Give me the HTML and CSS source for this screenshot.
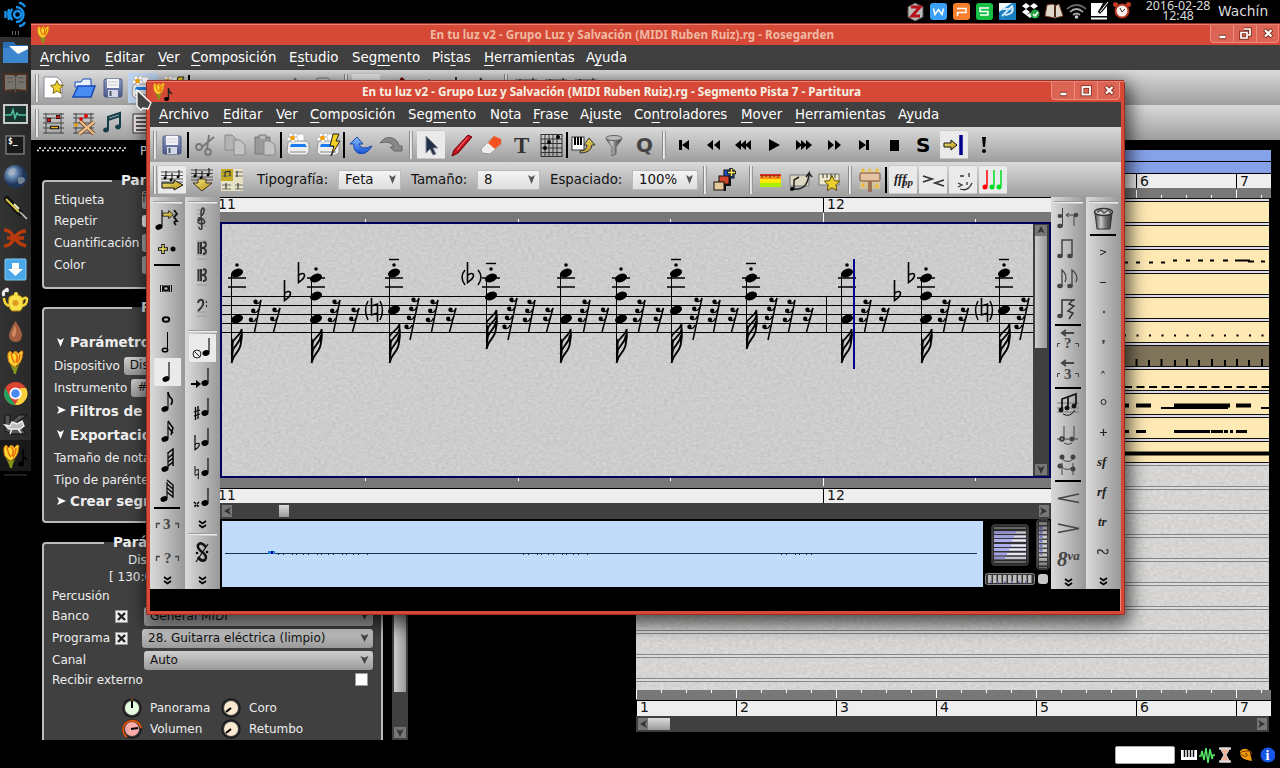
FILE: index.html
```html
<!DOCTYPE html>
<html lang="es">
<head>
<meta charset="utf-8">
<title>Rosegarden</title>
<link rel="stylesheet" href="styles.css">
</head>
<body>
<svg class="defs" width="0" height="0">
<defs>
<linearGradient id="gold" x1="0" y1="0" x2="1" y2="1"><stop offset="0" stop-color="#f5ec80"/><stop offset="1" stop-color="#b08a10"/></linearGradient>
<linearGradient id="blue" x1="0" y1="0" x2="0" y2="1"><stop offset="0" stop-color="#8cc4ff"/><stop offset="1" stop-color="#1550d8"/></linearGradient>
<linearGradient id="metal" x1="0" y1="0" x2="1" y2="0"><stop offset="0" stop-color="#444"/><stop offset=".35" stop-color="#ccc"/><stop offset=".6" stop-color="#777"/><stop offset="1" stop-color="#333"/></linearGradient>
<linearGradient id="disk" x1="0" y1="0" x2="0" y2="1"><stop offset="0" stop-color="#8a9ac4"/><stop offset="1" stop-color="#4a5888"/></linearGradient>
<linearGradient id="wheel" x1="0" y1="0" x2="1" y2="0"><stop offset="0" stop-color="#333"/><stop offset=".5" stop-color="#ccc"/><stop offset="1" stop-color="#333"/></linearGradient>
<linearGradient id="wheelv" x1="0" y1="0" x2="0" y2="1"><stop offset="0" stop-color="#111" stop-opacity=".8"/><stop offset=".35" stop-color="#111" stop-opacity="0"/><stop offset=".7" stop-color="#111" stop-opacity="0"/><stop offset="1" stop-color="#111" stop-opacity=".8"/></linearGradient>
<radialGradient id="globe" cx=".35" cy=".35"><stop offset="0" stop-color="#b8c8dc"/><stop offset=".5" stop-color="#5a7ba4"/><stop offset="1" stop-color="#1f3558"/></radialGradient>
<filter id="paper" x="0" y="0" width="100%" height="100%"><feTurbulence type="fractalNoise" baseFrequency=".28 .4" numOctaves="2" seed="4"/><feColorMatrix values="0 0 0 0 0  0 0 0 0 0  0 0 0 0 0  .3 .3 0 0 -.2"/></filter>
<g id="hd"><ellipse rx="6.3" ry="4" transform="rotate(-22)"/></g>
<g id="led"><path d="M-9 0H9M-9 9H9" stroke="#000" stroke-width="1.5"/></g>
<g id="fl3"><path d="M0 0C2-11 9-10 9.500-21Q11-27 10-34M0-9C2-19 9-19 9.500-28M0-18C2-26 8-26 10-33" fill="none" stroke="#000" stroke-width="1.900"/><path d="M0 0V-26L2-22V-10L1-4z"/></g>
<g id="fl4"><use href="#fl3"/><path d="M0-26C2-32 8-32 10-39V-30" fill="none" stroke="#000" stroke-width="1.700"/></g>
<g id="rb"><circle cx="-5.500" cy="1.700" r="2.200"/><path d="M-6 3.200Q-2 5 0 0" fill="none" stroke="#000" stroke-width="1.300"/></g>
<g id="r2"><use href="#rb"/><use href="#rb" x="-2.300" y="9"/><path d="M0 0L-6.500 24" stroke="#000" stroke-width="1.500"/></g>
<g id="r3"><use href="#rb"/><use href="#rb" x="-2.300" y="9"/><use href="#rb" x="-4.600" y="18"/><path d="M0 0L-6.500 32" stroke="#000" stroke-width="1.500"/></g>
<g id="r4"><use href="#rb"/><use href="#rb" x="-2.300" y="9"/><use href="#rb" x="-4.600" y="18"/><use href="#rb" x="-7" y="27"/><path d="M0 0L-9 42" stroke="#000" stroke-width="1.500"/></g>
<g id="flat"><path d="M0 0V20.500C3 18.500 6 16 6 13.500C6 10.500 2 11 0 13.500" fill="none" stroke="#000" stroke-width="1.600"/></g>
<g id="nat"><path d="M0 0V17L6 15M0 8L6 6V24" fill="none" stroke="#000" stroke-width="1.600"/></g>
<g id="cA"><use href="#hd" y="273"/><use href="#hd" y="319"/><use href="#led" y="278"/><circle cy="265" r="1.800"/><path d="M-5.500 274V362" stroke="#000"/><use href="#fl3" x="-5.500" y="363"/></g>
<g id="cB"><use href="#hd" y="278"/><use href="#hd" y="296"/><use href="#hd" y="319"/><use href="#led" y="278"/><circle cy="269" r="1.800"/><path d="M-4.500 278V362" stroke="#000"/><use href="#fl3" x="-4.500" y="363"/></g>
<g id="cC"><use href="#hd" y="273"/><use href="#hd" y="310"/><use href="#led" y="278"/><circle cy="265" r="1.800"/><path d="M-5 259.500H5" stroke="#000" stroke-width="1.400"/><path d="M-4.500 274V362" stroke="#000"/><use href="#fl4" x="-4.500" y="363"/></g>
<g id="cD"><use href="#hd" y="278"/><use href="#hd" y="296"/><use href="#led" y="278"/><circle cy="269" r="1.800"/><path d="M-5 263.500H5" stroke="#000" stroke-width="1.400"/><path d="M-4.500 278V349" stroke="#000"/><use href="#fl4" x="-4.500" y="349"/></g>
<g id="q"><ellipse cx="14" cy="21" rx="3.600" ry="2.700" transform="rotate(-20 14 21)"/><path d="M17 20V4" stroke="currentColor" stroke-width="1.100"/></g>
<g id="qr"><ellipse cx="19" cy="19" rx="3.600" ry="2.800" transform="rotate(-20 19 19)"/><path d="M22 18V4" stroke="#000" stroke-width="1.100"/></g>
<g id="rose"><path d="M7 2Q9 4 10 5Q11 1 14 3L15 5Q19 0 20 3Q19 6 19 9Q18 14 12 18Q5 15 5 9Q4 4 7 2z" fill="#fbd632" stroke="#d47a10"/><path d="M12 4Q16 7 13 13M8 4Q9 11 12 14M17 5Q17 10 14 14" fill="none" stroke="#e8690a" stroke-width="1.500"/><path d="M5 14Q9 17 11 25H13Q14 18 19 13Q15 18 12 18Q9 18 5 14z" fill="#86941c"/></g>
<g id="staff"><path d="M4 7H26M4 10.500H26M4 14H26M4 17H26" stroke="#333" stroke-width=".8"/><path d="M9 13V6M15 15V8M22 12V5" stroke="#000"/><circle cx="8" cy="13" r="1.400"/><circle cx="14" cy="15" r="1.400"/><circle cx="21" cy="12" r="1.400"/></g>
<g id="save"><rect x="6" y="6" width="18" height="18" rx="1.500" fill="url(#disk)" stroke="#48587f"/><rect x="9" y="6" width="12" height="9" fill="#f4f4f8"/><path d="M10 9H20M10 12H20" stroke="#ccc"/><rect x="10" y="17" width="10" height="7" fill="#d5d8e4"/><path d="M12.500 18V23" stroke="#456" stroke-width="2"/></g>
<g id="print"><path d="M9 4H21V13H9z" fill="#fff" stroke="#bbb"/><path d="M5 13Q5 11 8 11H22Q25 11 26 14V22L23 25H7L4 22z" fill="#eee" stroke="#999"/><path d="M8 14H22L24 17H7z" fill="#1c7cf0"/><path d="M7 21H23V23H7z" fill="#bbb"/><g fill="#fff" stroke="#999" stroke-width=".5"><circle cx="8" cy="5" r="2"/><circle cx="12.500" cy="5" r="2"/><circle cx="13" cy="9" r="2"/><circle cx="6" cy="9" r="2"/><circle cx="10" cy="11" r="2"/></g><circle cx="9.500" cy="8" r="2.300" fill="#f6a000"/></g>
<g id="bolt"><path d="M20 4H26L23 11H27L18 26L21 16H17z" fill="#f4d020" stroke="#222"/></g>
<g id="arr"><path d="M0 0H7V-3L13 2L7 7V4H0z" fill="url(#gold)" stroke="#111"/></g>
<g id="star"><path d="M0-8L2.500-2.500L8-2L4 2L5 8L0 5L-5 8L-4 2L-8-2L-2.500-2.500z" fill="#ecd030" stroke="#5d4a00"/></g>
<g id="chev"><path d="M-3.500-3L0-.500L3.500-3M-3.500 1L0 3.500L3.500 1" fill="none" stroke="#000" stroke-width="1.700"/></g>
<g id="min"><path d="M8 12H15" stroke="#803020" stroke-width="4.500"/><path d="M8.500 12H14.500" stroke="#fff" stroke-width="2.500"/></g>
<g id="cls"><path d="M7.500 4.500L15 12M15 4.500L7.500 12" stroke="#803020" stroke-width="4"/><path d="M8 5L14.500 11.500M14.500 5L8 11.500" stroke="#fff" stroke-width="2.200"/></g>
</defs>
</svg>

<header class="panel">
<svg class="tray" width="260" height="23" viewBox="900 0 260 23">
<path d="M908 7L915 3L923 7V17L915 21L908 17z" fill="#bbb" stroke="#555"/><path d="M911 7H920L912 16H920" fill="none" stroke="#b4151c" stroke-width="3"/>
<rect x="930" y="3" width="17" height="17" rx="3" fill="#3aa0f8"/><path d="M933.500 8.500L935 14.500L938.500 9.500L942 14.500L943.500 8.500" fill="none" stroke="#fff" stroke-width="1.500"/>
<rect x="953" y="3" width="17" height="17" rx="3" fill="#fa7f2c"/><path d="M957 8.500H966V12.500H957.500V16" fill="none" stroke="#fff" stroke-width="1.500"/>
<rect x="976" y="3" width="17" height="17" rx="3" fill="#15c044"/><path d="M989 8H980V11.500H988V15H980" fill="none" stroke="#fff" stroke-width="1.500"/>
<rect x="999" y="3" width="17" height="17" fill="#1c7fc0"/><path d="M999 3H1012L999 12z" fill="#eef6fa"/><path d="M1002 16L1012 6Q1015 14 1005 15M1002 9H1011" fill="none" stroke="#cce8fa" stroke-width="2"/>
<path d="M1026 3L1030 6L1026 9L1022 6zM1034 3L1038 6L1034 9L1030 6zM1026 9L1030 12L1026 15L1022 12zM1030 13L1034 15L1030 18L1026 15z" fill="#fff"/><circle cx="1035" cy="14" r="4.500" fill="#23a640"/><path d="M1033 14L1035 16L1038 12" fill="none" stroke="#fff" stroke-width="1.500"/>
<path d="M1047 5L1053 4L1055 6L1059 4L1063 16L1055 18L1045 16z" fill="#ddd8cc" stroke="#74462b"/><path d="M1055 6V17" stroke="#4b2914" stroke-width="2"/>
<g fill="none" stroke="#aaa" stroke-width="1.700"><path d="M1067 9Q1076.500 1 1086 9" stroke="#666"/><path d="M1070 12Q1076.500 6 1083 12M1073 15Q1076.500 12 1080 15"/></g><circle cx="1076.500" cy="17" r="1.800" fill="#ccc"/>
<path d="M1091 3H1103L1098 12H1102L1107 6V16H1091z" fill="#fff"/><path d="M1091 18.500H1107" stroke="#fff" stroke-width="2"/><path d="M1099 13L1107 2" stroke="#111" stroke-width="3"/><path d="M1100 12L1108 2" stroke="#fff"/>
<circle cx="1115.500" cy="4.500" r="2.500" fill="#c43a24"/><circle cx="1128.500" cy="4.500" r="2.500" fill="#c43a24"/><circle cx="1122" cy="11" r="6.500" fill="#f8f0ec" stroke="#b73420" stroke-width="2"/><path d="M1120 8L1122 12L1125 9" fill="none" stroke="#333"/>
</svg>
<div class="clock">2016-02-28<br>12:48</div>
<div class="user">Wachín</div>
</header>

<nav class="dock">
<div class="logo"><svg width="31" height="37"><g fill="none" stroke="#1590e8" stroke-width="2.500"><circle cx="17.500" cy="14.500" r="3.500"/><path d="M12.500 9A7.500 7.500 0 0 0 12.500 20M16 22A7.500 7.500 0 0 0 16 7M9 9Q7.500 14 9 20M5.500 11V18M19 3Q23 3 25 7M19 26Q23 26 25 22"/></g><path d="M12.500 31V35M15.500 31V35M18.500 31V35" stroke="#666"/></svg></div>
<svg viewBox="0 0 31 31"><path d="M3 5H14L16 8H28V26H3z" fill="#2a6fb5"/><path d="M3 11H28V26H3z" fill="#3c86d0"/><path d="M9 9H28V12L18 17z" fill="#fff"/></svg>
<svg viewBox="0 0 31 31"><path d="M4 6H14L15.500 8L17 6H27V23L17 22L15.500 25L14 22L4 23z" fill="#77736c" stroke="#4a2f20" stroke-width="2"/><path d="M15.500 8V24M7 10H13M7 14H13M18 10H24M18 14H24" stroke="#555"/></svg>
<svg viewBox="0 0 31 31"><rect x="4" y="6" width="23" height="18" fill="#18342f" stroke="#c8c8c8" stroke-width="2"/><path d="M5 16H11L13 11L15 19L17 14L19 16H26" fill="none" stroke="#53c09a" stroke-width="1.500"/></svg>
<svg viewBox="0 0 31 31"><rect x="6" y="6" width="18" height="18" fill="#191919" stroke="#777" stroke-width="1.500"/><text x="8" y="14" class="term">$_</text></svg>
<svg viewBox="0 0 31 31"><circle cx="15.500" cy="15.500" r="11.500" fill="url(#globe)"/><path d="M9 9Q14 5 17 9Q13 14 8 14M18 17Q25 14 25 20Q21 25 18 22z" fill="#a9b4bc" opacity=".6"/></svg>
<svg viewBox="0 0 31 31"><path d="M7 7L20 21" stroke="#111" stroke-width="6" stroke-linecap="round"/><path d="M6 7L19 20" stroke="#ddcd4a" stroke-width="2"/><path d="M20 20L27 27" stroke="#ccc" stroke-width="1.500"/><path d="M14 12L19 17" stroke="#ece9c8" stroke-width="2"/></svg>
<svg viewBox="0 0 31 31"><path d="M4 7Q10 7 13 13Q18 21 26 23M4 23Q10 23 13 17Q18 8 26 8M7 15H24" fill="none" stroke="#b93a0d" stroke-width="3.500"/></svg>
<svg viewBox="0 0 31 31"><rect x="5" y="5" width="21" height="21" rx="1" fill="#4aa7e8" stroke="#82cbf5"/><path d="M12 9H19V15H23L15.500 22L8 15H12z" fill="#fff"/></svg>
<svg viewBox="0 0 31 31"><path d="M9 12Q16 7 22 12Q25 22 20 26H12Q7 22 9 12z" fill="#f8e04a" stroke="#a77d10"/><path d="M9 21Q4 19 4 13M22 21Q27 20 27 14Q26 11 22 15" fill="none" stroke="#f3d635" stroke-width="2.500"/><circle cx="16" cy="9" r="2" fill="#f8e04a"/><circle cx="15.500" cy="18" r="3" fill="#e09a20"/><path d="M4 11Q2 7 6 5Q8 3 7 7" stroke="#eee" stroke-width="3" fill="none"/></svg>
<svg viewBox="0 0 31 31"><path d="M15.500 5Q23 16 22 20Q21 26 15.500 26Q9 25 9 20Q9 15 15.500 5z" fill="#a35d40"/><path d="M15 9Q18 17 14 21Q11 20 12 17z" fill="#d08862"/></svg>
<svg viewBox="0 0 31 31"><use href="#rose" x="3" y="2"/></svg>
<svg viewBox="0 0 31 31"><circle cx="15.500" cy="15.500" r="11.500" fill="#de4433"/><path d="M5.500 10L11 21L15.500 27A11.500 11.500 0 0 1 5.500 10z" fill="#1fa25c"/><path d="M15 27L21 16L20 10H26A11.500 11.500 0 0 1 15 27z" fill="#fbd03d"/><circle cx="15.500" cy="15.500" r="5.200" fill="#4a8bf0" stroke="#fff" stroke-width="1.800"/></svg>
<svg viewBox="0 0 31 31"><path d="M5 6H10V14L19 6H27L17 13L26 25H12L5 22z" fill="#555" stroke="#111"/><path d="M5 16L9 20H20L24 17L22 12L17 15L12 13L10 17zM12 20L10 25M18 20L21 24" fill="#bbb" stroke="#eee" stroke-width="1.500"/></svg>
<svg viewBox="0 0 31 31"><rect width="31" height="31" fill="#191919"/><use href="#rose" x="-1" y="3"/><path d="M23 9V23Q23 14 27 20" stroke="#000" stroke-width="1.500" fill="none"/><ellipse cx="21" cy="24" rx="3" ry="2.500"/></svg>
<i class="more"></i>
</nav>

<section class="main">
<div class="titlebar"><svg class="ticon" width="26" height="24"><use href="#rose" transform="scale(.75)" y="1"/></svg>
<svg class="tt" width="1180" height="22"><text x="396" y="15" textLength="404" lengthAdjust="spacingAndGlyphs">En tu luz v2 - Grupo Luz y Salvación (MIDI Ruben Ruiz).rg - Rosegarden</text></svg>
<div class="wbtns"><svg><use href="#min"/></svg><svg><path d="M10 4H16V10H14M7 7.500H13V13H7z" fill="none" stroke="#803020" stroke-width="3.500"/><path d="M10 4H16V10H14M7 7.500H13V13H7z" fill="none" stroke="#fff" stroke-width="1.700"/></svg><svg><use href="#cls"/></svg></div></div>
<div class="menu m1"><span><u>A</u>rchivo</span><span><u>E</u>ditar</span><span><u>V</u>er</span><span><u>C</u>omposición</span><span>E<u>s</u>tudio</span><span>Seg<u>m</u>ento</span><span>Pis<u>t</u>as</span><span><u>H</u>erramientas</span><span>A<u>y</u>uda</span></div>
<div class="bar mb"><i class="grip"></i>
<svg class="s29"><path d="M5 4H18L23 9V25H5z" fill="#fff" stroke="#889"/><use href="#star" transform="translate(18 14) scale(.8)"/></svg>
<svg class="s29"><path d="M6 9H12L14 6H22V14H6z" fill="#e8f1ff" stroke="#1349b8"/><path d="M4 24L9 13H26L22 24z" fill="#4b8cf0" stroke="#1349b8" stroke-width="1.500"/></svg>
<svg><use href="#save"/></svg>
<svg class="hover"><use href="#print"/></svg>
<svg><use href="#print"/><use href="#bolt"/></svg><i class="sep"></i>
<svg></svg><svg></svg><svg></svg>
<svg><path d="M6 20L14 6L17 10" fill="none" stroke="#666" stroke-width="2"/></svg><svg><path d="M6 5H17L21 9V22H6z" fill="#ccc" stroke="#777"/></svg><i class="grip"></i><svg class="act"></svg><svg><path d="M20 5L23 8L9 24" stroke="#700" stroke-width="3"/></svg><svg><path d="M8 18L18 6L24 10L14 22" fill="#a43"/></svg><svg><path d="M15 4V22" stroke="#333" stroke-width="2"/></svg><svg><path d="M9 5L20 20" stroke="#333" stroke-width="2"/></svg><i class="grip"></i><svg><use href="#staff"/></svg><svg><use href="#staff"/></svg><svg><use href="#staff"/></svg>
</div>
<div class="bar mb"><i class="grip"></i>
<svg class="s29"><path d="M4 6H25M4 10H25M4 15H25M4 20H25M4 25H25M7 5V26M22 5V26" stroke="#444"/><path d="M8 12H12M17 9H21" stroke="#111" stroke-width="4"/><path d="M8.500 12H11.500M17.500 9H20.500" stroke="#e01818" stroke-width="2.500"/><path d="M11 19.500H20" stroke="#111" stroke-width="3.500"/><path d="M12 19.500H19" stroke="#e8b020" stroke-width="1.500"/></svg>
<svg class="s29"><path d="M4 6H25M4 10H25M4 15H25M4 20H25M4 25H25M7 5V26M22 5V26" stroke="#444"/><path d="M11 13L25 26M25 14L10 26" stroke="#7c4b20" stroke-width="4"/><path d="M11 13L25 26M25 14L10 26" stroke="#eac18e" stroke-width="2.300"/><circle cx="17" cy="8" r="2" fill="#d00"/><circle cx="12" cy="11" r="1.800" fill="#d00"/><circle cx="7" cy="17" r="2" fill="#e0a010"/></svg>
<svg><g fill="#123c46" stroke="#123c46"><path d="M10 21V9L22 5V18M10 12L22 8" fill="none" stroke-width="2"/><ellipse cx="8" cy="22" rx="2.500" ry="2"/><ellipse cx="20" cy="19" rx="2.500" ry="2"/></g></svg>
<svg><path d="M5 6H25V25H5z" fill="#eee4e4" stroke="#333"/><path d="M8 10H22M8 14H22M8 18H22M8 22H22" stroke="#555" stroke-width="2"/></svg>
</div>
<div class="workspace">
<aside>
<div class="dotted"><svg width="92" height="8"><path d="M3 3H91" stroke="#eee" stroke-width="1.500" stroke-dasharray="2 3"/><path d="M1 5.500H91" stroke="#eee" stroke-width="1.500" stroke-dasharray="2 3"/></svg><span>Parámetros</span></div>
<div class="group g1"><b class="cap">Parámetros</b><p>Etiqueta<span class="mini">f</span></p><p>Repetir<span class="mini w"></span></p><p>Cuantificación<span class="mini"></span></p><p>Color<span class="mini"></span></p></div>
<div class="group g2"><b class="cap">Fuente</b><h4><svg><path d="M1 1L4.500 3L8 1L4.500 10z"/></svg>Parámetros</h4><p>Dispositivo<span class="drop">Dispositivo</span></p><p>Instrumento<span class="drop">#</span></p><h4><svg><path d="M1 1L10 5L1 9L3 5z"/></svg>Filtros de</h4><h4><svg><path d="M1 1L4.500 3L8 1L4.500 10z"/></svg>Exportación</h4><p>Tamaño de nota</p><p>Tipo de paréntesis</p><h4><svg><path d="M1 1L10 5L1 9L3 5z"/></svg>Crear segmento</h4></div>
<div class="group g3"><b class="cap">Parámetros</b><p class="dis">Dispositivo</p><p class="chan">[ 130:0 ]</p><p>Percusión</p>
<div class="f"><span>Banco</span><i class="check"><svg viewBox="0 0 11 11"><path d="M2 2L9 9M9 2L2 9"/></svg></i><em>General MIDI<svg viewBox="0 0 9 9"><path d="M0 0L4.500 2L9 0L4.500 9z"/></svg></em></div>
<div class="f prog"><span>Programa</span><i class="check"><svg viewBox="0 0 11 11"><path d="M2 2L9 9M9 2L2 9"/></svg></i><em>28. Guitarra eléctrica (limpio)<svg viewBox="0 0 9 9"><path d="M0 0L4.500 2L9 0L4.500 9z"/></svg></em></div>
<div class="f"><span>Canal</span><i></i><em>Auto<svg viewBox="0 0 9 9"><path d="M0 0L4.500 2L9 0L4.500 9z"/></svg></em></div>
<div class="ext"><span>Recibir externo</span><i class="check"></i></div>
<div class="knobs"><svg><circle cx="10" cy="10" r="9" stroke="#1a1a1a" stroke-width="1.500" fill="none"/><circle cx="10" cy="10" r="7" fill="#e4fbe0"/><path d="M10 10V3" stroke="#000" stroke-width="2"/><path d="M9 1H11" stroke="#e50"/></svg><span>Panorama</span><svg><circle cx="10" cy="10" r="9" stroke="#1a1a1a" stroke-width="1.500" fill="none"/><circle cx="10" cy="10" r="7" fill="#fbe8d0"/><path d="M10 10L5 14" stroke="#000" stroke-width="2"/></svg><span>Coro</span>
<svg><circle cx="10" cy="10" r="9" stroke="#1a1a1a" stroke-width="1.500" fill="none"/><path d="M5 18A9 9 0 1 1 19 9" stroke="#e85400" stroke-width="1.700" fill="none"/><circle cx="10" cy="10" r="7" fill="#fbaaaa"/><path d="M9 10L16 9" stroke="#000" stroke-width="2"/></svg><span>Volumen</span><svg><circle cx="10" cy="10" r="9" stroke="#1a1a1a" stroke-width="1.500" fill="none"/><circle cx="10" cy="10" r="7" fill="#fbe8d0"/><path d="M10 10L5 14" stroke="#000" stroke-width="2"/></svg><span>Retumbo</span></div></div>
</aside>
<div class="vscroll"><div class="thumb"></div><svg viewBox="0 0 12 12"><path d="M2 2L6 4L10 2L6 11z"/></svg></div>
<div class="tracks">
<svg width="635" height="58" viewBox="636 140 635 58"><rect x="636" y="150" width="635" height="11" fill="#85a1e8"/><rect x="636" y="162" width="635" height="11" fill="#85a1e8"/><rect x="636" y="174" width="635" height="15" fill="#eee"/><rect x="636" y="188" width="635" height="10" fill="#787878"/><path d="M1136.500 174V188M1236.500 174V188" stroke="#000"/><path d="M1136.500 190V198M1236.500 190V198M1161.500 195V198M1186.500 195V198M1211.500 195V198M1261.500 195V198" stroke="#fff"/><text x="1140" y="186">6</text><text x="1240" y="186">7</text></svg>
<svg width="633" height="492" viewBox="636 198 633 492"><defs><pattern id="rows" width="633" height="24" x="636" y="198" patternUnits="userSpaceOnUse"><rect width="633" height="24" fill="#fee9b4"/><rect width="633" height="1" fill="#111"/><rect y="1" width="633" height="2" fill="#dcdce4"/><rect y="3" width="633" height="1" fill="#111"/></pattern><pattern id="rows2" width="633" height="24" x="636" y="462" patternUnits="userSpaceOnUse"><rect y="0" width="633" height="4" fill="#ddd"/><rect y="0" width="633" height="1" fill="#858585"/><rect y="3" width="633" height="1" fill="#858585"/></pattern></defs>
<rect x="636" y="198" width="633" height="492" fill="#dddcda"/><rect x="636" y="462" width="633" height="228" filter="url(#paper)" opacity=".32"/><rect x="636" y="462" width="633" height="228" fill="url(#rows2)"/><rect x="636" y="198" width="633" height="265" fill="url(#rows)"/><rect x="636" y="346" width="633" height="20" fill="#80755b"/>
<g stroke="#000" stroke-width="2" fill="none"><path d="M1124 262.500H1128M1136 262.500h4m9 0h4m8 0h4M1173 260.500h4m9 0h4m8 0h5m7 0h4m9 0h5m7 0h14v1h5m7 0h4"/><path d="M1124 335.500H1269" stroke-dasharray="2 10.500"/><path d="M1136.500 359V366M1149 360V366M1161.500 359V366M1175 360V366M1187 359V366M1199 360V366M1212 359V366M1225 360V366M1237 359V366M1249 360V366M1262 359V366"/><path d="M1124 387H1269" stroke-dasharray="8 4.500"/><path d="M1125 405.500H1129M1136 405.500H1151M1174 405.500H1230M1236 405.500H1251" stroke-width="4"/><path d="M1161 408H1228M1261 408H1269"/><path d="M1124 431.500H1129M1136 431.500H1146M1174 431.500H1210M1211 431.500H1223M1224 431.500h4m2 0h3m3 0h11" stroke-width="3"/><path d="M1124 453.500H1269" stroke-width="4"/></g></svg>
<svg width="635" height="26" viewBox="636 690 635 26"><rect x="636" y="690" width="635" height="10" fill="#787878"/><rect x="636" y="700" width="635" height="1" fill="#000"/><rect x="636" y="701" width="635" height="15" fill="#eee"/><path d="M636.500 690V699M736.500 690V698M836.500 690V698M936.500 690V698M1036.500 690V698M1136.500 690V698M1236.500 690V698" stroke="#fff"/><path d="M661 691.500H1262" stroke="#fff" stroke-width="3" stroke-dasharray="1 24"/><path d="M636.500 700V716M736.500 700V716M836.500 700V716M936.500 700V716M1036.500 700V716M1136.500 700V716M1236.500 700V716" stroke="#000"/><text x="640" y="712">1</text><text x="740" y="712">2</text><text x="840" y="712">3</text><text x="940" y="712">4</text><text x="1040" y="712">5</text><text x="1140" y="712">6</text><text x="1240" y="712">7</text></svg>
<div class="hscroll"><svg viewBox="0 0 10 12"><path d="M9 2L2 6L9 10L7 6z"/></svg><b></b><svg viewBox="0 0 10 12" class="end"><path d="M1 2L8 6L1 10L3 6z"/></svg></div>
</div>
</div>
<footer><i></i><svg width="95" height="22" viewBox="1180 744 95 22"><rect x="1181" y="750" width="16" height="10" fill="#fff"/><path d="M1184.500 750V757M1187.500 750V757M1190.500 750V757M1193.500 750V757" stroke="#111" stroke-width="1.500"/><path d="M1199 756H1201L1202 751L1204 760L1206 748L1208 763L1210 749L1212 759L1213 755H1215" fill="none" stroke="#54e86a" stroke-width="1.500"/><path d="M1220 748H1230L1226 755L1230 762H1220L1224 755z" fill="#f2b093" stroke="#ddd"/><path d="M1219 748.500H1231M1219 761.500H1231" stroke="#ddd" stroke-width="2"/><path d="M1240 751Q1246 746 1250 752L1252 761L1247 760Q1239 758 1240 751z" fill="#f39c12"/><path d="M1245 754q2-2 2 1t-5 0t4-4t4 5" fill="none" stroke="#7b3c00"/><circle cx="1268" cy="755" r="7.500" fill="#1657e8"/><text x="1265.500" y="760" class="inf">i</text></svg></footer>
</section>

<section class="score">
<div class="titlebar"><svg class="ticon" width="26" height="22"><use href="#rose" transform="scale(.72)" y="1"/><path d="M18.500 18V7Q18 10 22 13" fill="none" stroke="#222" stroke-width="1.500"/><ellipse cx="16.500" cy="18" rx="2.500" ry="2"/></svg>
<svg class="tt" width="880" height="22"><text x="212" y="15" textLength="499" lengthAdjust="spacingAndGlyphs">En tu luz v2 - Grupo Luz y Salvación (MIDI Ruben Ruiz).rg - Segmento Pista 7 - Partitura</text></svg>
<div class="wbtns"><svg><use href="#min"/></svg><svg><rect x="7.500" y="5" width="7.500" height="7.500" fill="none" stroke="#803020" stroke-width="3.500"/><rect x="7.500" y="5" width="7.500" height="7.500" fill="none" stroke="#fff" stroke-width="1.800"/></svg><svg><use href="#cls"/></svg></div></div>
<div class="menu m2"><span><u>A</u>rchivo</span><span><u>E</u>ditar</span><span><u>V</u>er</span><span><u>C</u>omposición</span><span>Seg<u>m</u>ento</span><span>N<u>o</u>ta</span><span><u>F</u>rase</span><span>A<u>j</u>uste</span><span>Co<u>n</u>troladores</span><span><u>M</u>over</span><span><u>H</u>erramientas</span><span>A<u>y</u>uda</span></div>
<div class="bar"><i class="grip"></i>
<svg><use href="#save"/></svg><i class="sep"></i>
<svg><g fill="none" stroke="#777" stroke-width="1.800"><circle cx="9" cy="17" r="3"/><circle cx="18" cy="22" r="3"/><path d="M12 17L24 7M17 19L19 5"/></g></svg>
<svg><path d="M5 5H12L16 9V20H5z" fill="#b4b4b4" stroke="#888"/><path d="M14 10H20L25 15V25H14z" fill="#c4c4c4" stroke="#888"/></svg>
<svg><path d="M5 7H20V24H5z" fill="#999" stroke="#777"/><path d="M9 9V5H16V9" fill="#bbb" stroke="#777"/><path d="M14 11H20L25 15V25H14z" fill="#c4c4c4" stroke="#888"/></svg><i class="sep"></i>
<svg><use href="#print"/></svg><svg><use href="#print"/><use href="#bolt"/></svg><i class="sep"></i>
<svg><path d="M4 14L11 7L17 14H13Q15 21 26 16Q20 26 12 23Q7 20 8 14z" fill="url(#blue)" stroke="#1346a8"/></svg>
<svg><path d="M26 21L18 21L14 17H18Q15 10 4 13Q9 6 16 8Q22 10 23 16H26z" fill="#888" stroke="#666"/></svg><i class="grip"></i>
<svg class="act"><path d="M10 6L22 18H17L20 24L17 25L14 19L10 23z" fill="#223048" stroke="#889"/></svg>
<svg><path d="M22 5L26 7L12 23L6 26L8 20z" fill="#c5121c" stroke="#6c0008"/><path d="M22 7L11 20" stroke="#ff8884"/></svg>
<svg><path d="M5 19L17 7L25 10V15L14 24L6 23z" fill="#eee" stroke="#999"/><path d="M12 13L18 6L25 9V14L19 19z" fill="#f35322"/></svg>
<svg><text x="8" y="23" class="bigT">T</text></svg>
<svg><path d="M5 4V27M9 4V27M13 4V27M17 4V27M21 4V27M26 4V27M5 4.500H26M5 9H26M5 13.500H26M5 18H26M5 22.500H26M5 26.500H26" stroke="#333"/><circle cx="22" cy="7" r="2"/><circle cx="13" cy="12" r="2"/><circle cx="9" cy="18" r="2"/></svg><i class="sep"></i>
<svg><rect x="3" y="7" width="12" height="13" fill="#fff" stroke="#333"/><path d="M6 7V15M9 7V15M12 7V15" stroke="#000" stroke-width="2"/><path d="M11 21Q18 21 18 15H15L20 8L26 15H23Q22 23 11 23z" fill="url(#gold)" stroke="#333"/></svg>
<svg><path d="M7 9H23L17 17V24L13 26V17z" fill="url(#metal)" stroke="#666"/><ellipse cx="15" cy="8" rx="8" ry="2.500" fill="#bbb" stroke="#666"/></svg>
<svg><text x="7" y="22" class="bigQ">Q</text></svg><i class="grip"></i>
<svg><path d="M10 10h3v10h-3zM20 10V20L13 15z"/></svg>
<svg><path d="M14 10V20L8 15zM21 10V20L15 15z"/></svg>
<svg><path d="M12 10V20L6 15zM17 10V20L11 15zM22 10V20L16 15z"/></svg>
<svg><path d="M10 9L21 15L10 21z"/></svg>
<svg><path d="M7 10L13 15L7 20zM12 10L18 15L12 20zM17 10L23 15L17 20z"/></svg>
<svg><path d="M9 10L15 15L9 20zM16 10L22 15L16 20z"/></svg>
<svg><path d="M10 10L17 15L10 20zM17 10h3v10h-3z"/></svg>
<svg><rect x="11" y="10" width="9" height="11"/></svg>
<svg><text x="7" y="22" class="bigS">S</text></svg>
<svg class="act"><use href="#arr" transform="translate(5 13)"/><path d="M22 5V25" stroke="#008" stroke-width="3.500"/></svg>
<svg><path d="M13 7H17L16 17H14z"/><circle cx="15" cy="21" r="2"/></svg>
</div>
<div class="bar b2"><i class="grip"></i>
<svg class="act"><use href="#staff"/><path d="M5 18H17V15L26 20L17 25V23H5z" fill="url(#gold)" stroke="#111"/></svg>
<svg><use href="#staff" y="-2"/><path d="M11 14H19V18H25L15 26L6 18H11z" fill="url(#gold)" stroke="#432"/></svg>
<svg><path d="M4 4H26V26H4z" fill="#e4e1c4"/><rect x="4" y="4" width="12" height="12" fill="#c4aa20"/><path d="M5 7H14M5 11H14M5 20H14M5 24H14M18 7H26M18 11H26M18 20H26M18 24H26" stroke="#777"/><path d="M8 12V7L13 6V11M9 24V18M20 12V6M21 24V18" fill="none" stroke="#222"/></svg>
<label>Tipografía:</label><span class="combo c1">Feta<svg viewBox="0 0 9 9"><path d="M1 0L4.500 2L8 0L4.500 9z"/></svg></span>
<label>Tamaño:</label><span class="combo c2">8<svg viewBox="0 0 9 9"><path d="M1 0L4.500 2L8 0L4.500 9z"/></svg></span>
<label>Espaciado:</label><span class="combo c3">100%<svg viewBox="0 0 9 9"><path d="M1 0L4.500 2L8 0L4.500 9z"/></svg></span><i class="grip"></i>
<svg><rect x="14" y="5" width="10" height="8" fill="#1854d0" stroke="#111"/><path d="M21 3V12M17 7.500H26" stroke="#222" stroke-width="3.500"/><path d="M21.500 4V11M18 7.500H25" stroke="#fee55b" stroke-width="1.500"/><rect x="9" y="11" width="10" height="8" fill="#d5472a" stroke="#111"/><rect x="4" y="17" width="10" height="8" fill="#e5c89a" stroke="#111"/><path d="M20 13V20H15V26" fill="none" stroke="#111" stroke-width="2"/></svg><i class="grip wide"></i>
<svg><path d="M5 10H26V22H5z" fill="#a6f000"/><path d="M5 10H26V18H5z" fill="#ffe80a"/><path d="M5 10H26V14H5z" fill="#ff8a20"/><path d="M5 10H26" stroke="#d00" stroke-width="1.500"/><path d="M7 10V13M11 10V12M15 10V13M19 10V12M23 10V13" stroke="#333"/></svg>
<svg><path d="M5 10H24V21H5z" fill="#ddd6c0" stroke="#777"/><path d="M8 24Q23 26 24 8L21 12M24 8L27 12M9 24V15L14 12" fill="none" stroke="#222" stroke-width="1.500"/><circle cx="7" cy="24" r="2"/></svg>
<svg><path d="M4 9H24V20H4z" fill="#eee8cc" stroke="#777"/><path d="M8 9V13M12 9V13M16 9V13M20 9V13" stroke="#333"/><use href="#star" transform="translate(17 18) scale(.95)"/></svg><i class="grip"></i>
<svg><path d="M5 5H25V24H5z" fill="#f3d67b" opacity=".5"/><rect x="5" y="8" width="20" height="8" rx="1" fill="#e4c2a2" stroke="#7b4a35"/><rect x="13" y="16" width="4" height="11" fill="#9d7358"/><g fill="#f3b820"><circle cx="8" cy="5" r="1.500"/><circle cx="15" cy="5" r="1.300"/><circle cx="22" cy="5" r="1.500"/><circle cx="8" cy="20" r="1.500"/><circle cx="22" cy="21" r="1.500"/></g></svg><i class="sep"></i>
<svg class="act"><text x="6" y="18" class="dyn">fff</text><text x="14" y="21" class="dyn s">pp</text></svg>
<svg class="act"><path d="M5 11L14 14L5 17M26 15L17 18L26 21" fill="none" stroke="#333" stroke-width="1.700"/></svg>
<svg class="act"><path d="M12 11H16M21 8V12M19 17V20M10 18L14 20L10 22M12 24Q20 27 24 18" fill="none" stroke="#333" stroke-width="1.300"/></svg>
<svg class="act"><path d="M9 5V21" stroke="#f00" stroke-width="1.500"/><circle cx="7" cy="22" r="2.500" fill="#f00"/><path d="M16 5V21M23 5V21" stroke="#0d2" stroke-width="1.500"/><circle cx="14" cy="22" r="2.500" fill="#0d2"/><circle cx="21" cy="22" r="2.500" fill="#0d2"/></svg>
</div>
<div class="body">
<div class="col"><i class="hgrip"></i>
<svg><g transform="translate(-5 2)"><use href="#q"/></g><use href="#arr" transform="translate(13 9) scale(.8)"/><path d="M24 6L27 10L24 13L27 17Q22 17 26 21" fill="none" stroke="#111" stroke-width="1.800"/></svg>
<svg><path d="M8 15H18M13 10V20" stroke="#111" stroke-width="3.500"/><path d="M9 15H17M13 11V19" stroke="#f5e867" stroke-width="1.500"/><circle cx="23" cy="15" r="2.500"/></svg><i class="hsep"></i>
<svg><path d="M10.500 18V25M12.500 18V25M19.500 18V25M21.500 18V25M13 19H19M13 24H19" stroke="#111"/><ellipse cx="16" cy="21.500" rx="2.500" ry="2" fill="none" stroke="#000" stroke-width="1.600"/></svg>
<svg><ellipse cx="16" cy="22.500" rx="3.200" ry="2.200" fill="none" stroke="#000" stroke-width="2"/></svg>
<svg><ellipse cx="15" cy="23" rx="2.700" ry="1.800" fill="none" stroke="#000" stroke-width="1.500"/><path d="M17.500 23V5" stroke="#000"/></svg>
<svg class="act"><use href="#q" x="2" y="1"/></svg>
<svg><g transform="translate(1 1)"><use href="#q"/><path d="M17 4Q18 9 21 11Q22 13 20 17" fill="none" stroke="#000" stroke-width="1.500"/></g></svg>
<svg><g transform="translate(1 1)"><use href="#q"/><path d="M17 3L22 10L20 17M17 9L22 15" fill="none" stroke="#000" stroke-width="1.500"/></g></svg>
<svg><g transform="translate(1 1)"><use href="#q"/><path d="M17 5L22 1V18M17 10L22 6M17 14L22 10M17 18L22 14" fill="none" stroke="#000" stroke-width="1.500"/></g></svg>
<svg><g transform="translate(0 1)"><use href="#q"/><path d="M17 2L23 7V20M17 6L23 11M17 10L23 15M17 14L23 19" fill="none" stroke="#000" stroke-width="1.300"/></g></svg><i class="hsep"></i>
<svg><path d="M6.500 18V13.500H10M28.500 18V13.500H25" fill="none" stroke="#444" stroke-width="1.300"/><text x="13" y="19" class="tri">3</text></svg>
<svg><path d="M6.500 21V16.500H10M28.500 21V16.500H25" fill="none" stroke="#444" stroke-width="1.300"/><text x="14" y="23" class="tri">?</text></svg>
<svg class="cv"><use href="#chev" x="17.500" y="10"/></svg></div>
<div class="col"><i class="hgrip"></i>
<svg><path d="M12 6H22M12 10H22M12 14H22M12 18H22M12 22H22" stroke="#999"/><path d="M17 25Q14 26 14 23M17 25L16 8Q17 2 19 5Q20 10 14 14Q11 19 16 20Q21 20 19 16Q16 13 14 17" fill="none" stroke="#333" stroke-width="1.500"/></svg>
<svg><path d="M12 7H22M12 21H22M12 25H22" stroke="#999"/><path d="M13.500 8V20M16 8V20M17 14Q20 14 21 17Q21 20 18 20M17 14Q21 14 21 10Q20 7 18 9" fill="none" stroke="#333" stroke-width="2"/></svg>
<svg><path d="M12 7H22M12 17H22M12 21H22" stroke="#999"/><path d="M13.500 5V17M16 5V17M17 11Q20 11 21 14Q21 17 18 17M17 11Q21 11 21 7Q20 4 18 6" fill="none" stroke="#333" stroke-width="2"/></svg>
<svg><path d="M12 6H22M12 18H22M12 22H22" stroke="#999"/><path d="M13 9Q14 5 17 6Q21 10 13 17" fill="none" stroke="#333" stroke-width="2"/><path d="M21 8H22M21 12H22" stroke="#222" stroke-width="2"/></svg><i class="hgrip two"></i>
<svg class="act"><use href="#qr" x="2" y="1"/><circle cx="12" cy="21" r="4" fill="none" stroke="#222"/><path d="M9 18L15 24" stroke="#222"/></svg>
<svg><g transform="translate(1 1)"><use href="#qr"/><path d="M5 20H11" stroke="#000" stroke-width="2"/><path d="M10 16L15 20L10 24z"/></g></svg>
<svg><g transform="translate(1 1)"><use href="#qr"/><path d="M9.500 13V26M12 12V25M8 18L14 16M8 22L14 20" stroke="#000" stroke-width="1.300"/></g></svg>
<svg><g transform="translate(1 1)"><use href="#qr"/><use href="#flat" transform="translate(9 11) scale(.72)"/></g></svg>
<svg><g transform="translate(1 1)"><use href="#qr"/><use href="#nat" transform="translate(9 12) scale(.55)"/></g></svg>
<svg><g transform="translate(1 1)"><use href="#qr"/><path d="M8 18L13 23M13 18L8 23" stroke="#000" stroke-width="1.600" stroke-dasharray="2.500 1.500"/></g></svg>
<svg class="cv"><use href="#chev" x="17.500" y="11"/></svg><i class="hgrip three"></i>
<svg><path d="M21 9Q16 3 13 7Q12 10 17 14Q23 18 20 22Q16 24 13 19" fill="none" stroke="#111" stroke-width="2.600"/><path d="M23 6L11 24" stroke="#111" stroke-width="1.300"/><circle cx="12" cy="15" r="1.300"/><circle cx="22" cy="14" r="1.300"/></svg>
<svg class="cv"><use href="#chev" x="17.500" y="12"/></svg></div>
<div class="center">
<svg width="831" height="25" viewBox="220 197 831 25"><rect x="220" y="197" width="831" height="25" fill="#eee"/><rect x="220" y="197" width="831" height="1"/><rect x="220" y="212" width="831" height="10" fill="#787878"/><path d="M823.500 198V212" stroke="#000"/><path d="M823.500 213V222M365.500 219V222M518.500 219V222M670.500 219V222M975.500 219V222" stroke="#fff"/><text x="218" y="209">11</text><text x="827" y="209">12</text></svg>
<div class="view"><svg width="811" height="252" viewBox="222 224 811 252"><rect x="222" y="224" width="811" height="252" fill="#d3d3d3"/><rect x="222" y="224" width="811" height="252" filter="url(#paper)" opacity=".3"/>
<path d="M222 296.500H1033M222 305.500H1033M222 314.500H1033M222 323.500H1033M222 332.500H1033M826.500 296V333" stroke="#000"/>
<use href="#cA" x="237"/><use href="#r3" x="261" y="300"/><use href="#r2" x="280" y="308"/>
<use href="#flat" x="284.500" y="280"/><use href="#flat" x="298.500" y="262"/><use href="#cB" x="316"/><use href="#r3" x="340" y="300"/><use href="#r2" x="359" y="308"/>
<use href="#nat" x="371.500" y="298"/><path d="M368 301Q363 310 368 320M380 301Q385 310 380 320" fill="none" stroke="#000" stroke-width="1.500"/><use href="#cC" x="394"/><use href="#r4" x="419" y="298"/><use href="#r3" x="438" y="300"/><use href="#r2" x="456" y="308"/>
<use href="#flat" x="467.500" y="262"/><path d="M465 270Q459 277 465 285M478 270Q484 277 478 285" fill="none" stroke="#000" stroke-width="1.500"/><use href="#cD" x="491"/><use href="#r4" x="517" y="298"/><use href="#r3" x="535" y="300"/><use href="#r2" x="553" y="308"/>
<use href="#cA" x="566"/><use href="#r3" x="590" y="300"/><use href="#r2" x="608.500" y="308"/><use href="#cB" x="621"/><use href="#r3" x="645" y="300"/><use href="#r2" x="663.500" y="308"/>
<use href="#cC" x="676"/><use href="#r4" x="702" y="298"/><use href="#r3" x="720" y="300"/><use href="#r2" x="738" y="308"/><use href="#cD" x="751"/><use href="#r4" x="777" y="298"/><use href="#r3" x="795" y="300"/><use href="#r2" x="813" y="308"/>
<use href="#cA" x="847"/><use href="#r3" x="871" y="300"/><use href="#r2" x="889" y="308"/><use href="#flat" x="894.500" y="280"/><use href="#flat" x="908.500" y="262"/><use href="#cB" x="926"/><use href="#r3" x="950" y="300"/><use href="#r2" x="968.500" y="308"/>
<use href="#nat" x="981.500" y="298"/><path d="M978 301Q973 310 978 320M990 301Q995 310 990 320" fill="none" stroke="#000" stroke-width="1.500"/><use href="#cC" x="1004"/><use href="#r4" x="1029" y="298"/><path d="M854 259V369" stroke="#00008b" stroke-width="2"/></svg>
<div class="vs"><svg viewBox="0 0 12 12"><path d="M6 1L10 9L6 7L2 9z"/></svg><div></div><svg viewBox="0 0 12 12"><path d="M2 2L6 4L10 2L6 11z"/></svg></div></div>
<svg width="831" height="25" viewBox="220 478 831 25"><rect x="220" y="478" width="831" height="25" fill="#eee"/><rect x="220" y="478" width="831" height="10" fill="#787878"/><rect x="220" y="488" width="831" height="1"/><path d="M823.500 489V503" stroke="#000"/><path d="M823.500 478V486M365.500 478V481M518.500 478V481M670.500 478V481M975.500 478V481" stroke="#fff"/><text x="218" y="500">11</text><text x="827" y="500">12</text></svg>
<div class="hscroll"><svg viewBox="0 0 10 12"><path d="M9 2L2 6L9 10L7 6z"/></svg><b class="sm"></b><svg viewBox="0 0 10 12" class="end"><path d="M1 2L8 6L1 10L3 6z"/></svg></div>
<svg width="831" height="70" viewBox="220 519 831 70"><rect x="220" y="519" width="831" height="70"/><rect x="222" y="521" width="761" height="66" fill="#c0dcfa"/><path d="M225 553.500H977" stroke="#123050"/><path d="M268 552.500H275" stroke="#2080e8" stroke-width="3"/><path d="M272 551V554" stroke="#008" stroke-width="2"/><path d="M278 554.500H370M523 554.500H590M781 554.500H815" stroke="#123050" stroke-dasharray="1 4 1 8 1 3 1 6"/>
<rect x="992" y="525" width="36" height="40" rx="2" fill="#333" stroke="#666"/><g stroke-width="2.500"><path d="M994 528H1026M994 562H1026" stroke="#aaa" stroke-width="1.500"/><path d="M994 532.500H1026M994 536.500H1026M994 540.500H1026M994 545.500H1026M994 549.500H1026M994 554H1026M994 558H1026" stroke="#ececfc"/><path d="M994 532.500H1016M994 536.500H1014M994 540.500H1012M994 545.500H1011M994 549.500H1009M994 554H1007M994 558H1005" stroke="#a9a9f4"/></g><rect x="992" y="525" width="36" height="40" fill="url(#wheelv)" opacity=".5"/>
<rect x="1037" y="520" width="12" height="49" rx="2" fill="#444" stroke="#777"/><path d="M1043 522V568" stroke="#ccc" stroke-width="8" stroke-dasharray="3 1.500"/><path d="M1041 526V555" stroke="#77b" stroke-width="3" stroke-dasharray="3 1.500"/><rect x="1037" y="520" width="12" height="49" fill="url(#wheelv)" opacity=".7"/>
<rect x="985.500" y="573.500" width="49" height="11" rx="2" fill="#333" stroke="#888"/><path d="M988 579H1033" stroke="#bbb" stroke-width="8" stroke-dasharray="3.500 1.500"/><path d="M990 582H1028" stroke="#77b" stroke-width="2" stroke-dasharray="2 5"/><rect x="1038" y="574" width="10" height="10" rx="3" fill="#c8c8c8"/></svg>
</div>
<div class="col dim"><i class="hgrip"></i>
<svg><g transform="translate(1 0)"><ellipse cx="8" cy="22" rx="2.800" ry="2.200"/><ellipse cx="8" cy="12" rx="2.500" ry="2"/><path d="M10.500 4V22M14 11H22M14 11L17 9M14 11L17 13M22 11V22" stroke="#444" fill="none"/><circle cx="24" cy="11" r="2.300"/></g></svg>
<svg><g transform="translate(2 0)"><path d="M9 22V6H19V22" fill="none" stroke="#444" stroke-width="1.500"/><ellipse cx="7" cy="22" rx="2.800" ry="2.200"/><ellipse cx="17" cy="22" rx="2.800" ry="2.200"/></g></svg>
<svg><g transform="translate(2 0)"><path d="M9 22V6Q15 11 12 18M19 22V6Q26 11 23 18" fill="none" stroke="#444" stroke-width="1.300"/><ellipse cx="7" cy="22" rx="2.800" ry="2.200"/><ellipse cx="17" cy="22" rx="2.800" ry="2.200"/></g></svg>
<svg><g transform="translate(2 0)"><path d="M9 22V6H22M20 6L16 10L21 12L15 17L20 19L16 25" fill="none" stroke="#333" stroke-width="1.500"/><ellipse cx="7" cy="22" rx="2.800" ry="2.200"/></g></svg><i class="hsep"></i>
<svg><path d="M11 6H23M15 3L11 6L15 9" fill="none" stroke="#444" stroke-width="2"/><path d="M6.500 20V16.500H9M27.500 20V16.500H24" fill="none" stroke="#444"/><text x="13" y="21" class="tri">?</text></svg>
<svg><path d="M11 6H23M15 3L11 6L15 9" fill="none" stroke="#444" stroke-width="2"/><path d="M6.500 20V16.500H9M27.500 20V16.500H24" fill="none" stroke="#444"/><text x="13" y="22" class="tri">3</text></svg><i class="hsep"></i>
<svg><g fill="#111" stroke="#111"><path d="M6 13H28M6 18H28M6 22H28" stroke="#777"/><path d="M11 19V9L25 4V15M17 17V7" fill="none" stroke-width="1.700"/><circle cx="10" cy="20" r="2"/><circle cx="16" cy="18" r="2"/><circle cx="23" cy="16" r="2"/><path d="M12 24Q19 28 24 20" fill="none"/></g></svg>
<svg><path d="M6 19H27M13 18V6M23 18V6M13 23Q17 26 21 23" fill="none" stroke="#444"/><circle cx="11" cy="19" r="2" fill="none" stroke="#333" stroke-width="1.500"/><circle cx="21" cy="19" r="2.500"/></svg>
<svg><path d="M11 13V25M22 13V25M11 9Q17 14 22 9M11 17Q16 22 22 17" fill="none" stroke="#444"/><circle cx="11" cy="7" r="2.500"/><circle cx="22" cy="7" r="2.500"/><circle cx="9" cy="16" r="2.500"/><circle cx="22" cy="19" r="2.500"/></svg><i class="hsep"></i>
<svg><path d="M28 11L7 15.500L28 19.500" fill="none" stroke="#444" stroke-width="1.600"/></svg>
<svg><path d="M7 11L28 15.500L7 19.500" fill="none" stroke="#444" stroke-width="1.600"/></svg>
<svg><text x="6" y="23" class="va">8<tspan font-size="13" dy="-6">va</tspan></text></svg>
<svg class="cv"><use href="#chev" x="17.500" y="9"/></svg></div>
<div class="col dim r"><i class="hgrip"></i>
<svg><path d="M9 9L11 25H24L26 9z" fill="url(#metal)" stroke="#333"/><ellipse cx="17.500" cy="8" rx="9" ry="3.500" fill="#ccc" stroke="#333" stroke-width="1.500"/><path d="M11 8L15 6L18 9L22 6L25 9" fill="none" stroke="#555" stroke-width="1.500"/></svg><i class="hsep"></i>
<svg><path d="M14 13L20 15L14 18" fill="none" stroke="#222"/></svg>
<svg><path d="M14 15.500H20" stroke="#222"/></svg>
<svg><circle cx="18" cy="15" r="1.200"/></svg>
<svg><path d="M16 13H19L18 17H17z"/></svg>
<svg><path d="M15 18L16 14H18L19 18L17 15z"/></svg>
<svg><circle cx="17.500" cy="15" r="2.500" fill="none" stroke="#222"/></svg>
<svg><path d="M14 15.500H21M17.500 12V19" stroke="#222" stroke-width="1.200"/></svg>
<svg><text x="11" y="19" class="dyn">sf</text></svg>
<svg><text x="11" y="19" class="dyn">rf</text></svg>
<svg><text x="12" y="19" class="dyn">tr</text></svg>
<svg><path d="M12.500 17Q10 13 14 13Q16 13 18 16Q22 18 22 14Q22 12 20 13" fill="none" stroke="#333" stroke-width="1.300"/></svg>
<svg class="cv"><use href="#chev" x="17.500" y="14"/></svg></div>
</div>
</section>
<svg class="cursor" width="20" height="28"><path d="M1 1V17L5 21L7 19L12 20L15 14L1 1z" fill="#444" stroke="#fff" stroke-width="1.300"/></svg>
</body>
</html>
```
FILE: styles.css
```css
*{box-sizing:border-box}
body{margin:0;width:1280px;height:768px;overflow:hidden;background:#000;position:relative;font:12px "DejaVu Sans",sans-serif;color:#fff}
.defs{position:absolute}
svg{display:block;flex:none}
p,h4{margin:0;font-weight:normal}
.panel{height:23px;display:flex;padding-left:900px;color:#ddd}
.tray{margin-right:-16px}
.clock{width:68px;font:12.400px/10px "Noto Sans",sans-serif;text-align:center;padding-top:1px;white-space:nowrap}
.user{font-size:13.800px;line-height:22px;margin-left:6px}
.dock{position:absolute;left:0;top:0;width:31px;height:471px;background:linear-gradient(90deg,#333,#292929)}
.dock>svg{width:31px;height:31px}
.dock .logo{background:#000;height:37px}
.dock .more{display:block;height:2px;width:23px;margin:3px 4px;background:#1e1e1e}
.term{font:bold 8px "DejaVu Sans Mono",monospace;fill:#fff}
.main{position:absolute;left:31px;top:23px;width:1249px;height:745px;background:#000}
.titlebar{height:22px;background:#d64937;border-top:1px solid #963428;box-shadow:inset 0 1px #ea8072;display:flex;position:relative}
.ticon{width:26px}
.main .ticon{margin-left:3px}
.tt{margin-left:-26px}
.tt text{font:bold 12px "Noto Sans",sans-serif;fill:#f6f2e4}
.main .tt text{fill:#f0b9a2}
.wbtns{display:flex;position:absolute;right:1px;top:1px;border:1px solid #ef8d80;border-top:0;border-radius:0 0 4px 4px;background:#dc6455}
.wbtns svg{width:23px;height:17px;border-right:1px solid #ef8d80}
.wbtns svg:last-child{border:0;width:21px}
.menu{height:25px;background:#404040;display:grid;font-size:13.330px;line-height:25px;white-space:nowrap}
.menu u{text-underline-offset:3px}
.m1{padding-left:9px;grid-template-columns:65px 53px 33px 98px 63px 80px 52px 102px 60px}
.m2{padding-left:9px;grid-template-columns:64px 53px 34px 98px 82px 43px 47px 54px 107px 54px 103px 60px}
.bar{height:35px;background:linear-gradient(#dadada,#9e9e9e);display:flex;align-items:center;color:#111;padding-left:3px}
.bar>svg{width:30px;height:30px}
.bar>svg.s29{width:29.500px}
.main .bar{padding-left:4px}
.bar>svg.act,.col>svg.act{background:#eaeaea;border-radius:2px;box-shadow:inset 0 0 0 1px #b8b8b8;clip-path:inset(1px)}
.bar>svg.hover{background:#bdd2f0}
.grip{flex:none;width:4px;height:28px;background:linear-gradient(90deg,#888 1px,#eee 1px 2px,#ddd 2px 3px,#999 3px)}
.bar svg+.grip{margin:0 3px}
.bar .grip.wide{margin:0 2px 0 9px}
.b2 .combo+.grip{margin:0 3px 0 5px}
.sep{flex:none;width:3px;height:26px;background:linear-gradient(90deg,#000 2px,transparent 2px)}
.bigT{font:bold 23px "Liberation Serif",serif;fill:#333}
.bigQ{font:bold 20px "DejaVu Sans",sans-serif;fill:#444}
.bigS{font:bold 20px "DejaVu Sans",sans-serif}
.dyn{font:italic bold 13px "Liberation Serif",serif;fill:#222}
.dyn.s{font-size:11px}
.tri{font:bold 15px "Liberation Serif",serif;fill:#444}
.va{font:italic bold 21px "Liberation Serif",serif;fill:#444}
.b2 label{font-size:13.330px;padding-left:10px;width:91px}
.b2 .c1~label{width:76px}
.b2 .c2~label{width:92px}
.combo{flex:none;height:20px;width:63px;background:linear-gradient(#f4f4f4,#dedede);border:1px solid #bbb;border-radius:1px;font-size:13.330px;line-height:18px;padding-left:6px;display:flex;justify-content:space-between;align-items:center}
.combo svg{width:9px;height:9px;margin-right:3px;fill:#555}
.combo.c3{width:66px}
.workspace{display:flex;height:600px}
aside{width:352px;padding-left:11px;flex:none}
.dotted{height:40px;display:flex;margin-left:-6px;padding-top:4px}
.dotted svg{width:104px;margin-top:1px}
.group{position:relative;width:341px;background:#404040;border:2px solid #bbb;border-radius:4px;white-space:nowrap;color:#eee;display:grid;align-items:center}
.cap{position:absolute;top:-11px;left:68px;padding-left:9px;font-size:13.500px;line-height:18px;background:linear-gradient(#000 9px,#404040 9px)}
.g1{height:109px;padding:8px 0 0 10px;grid-template-rows:20px 21px 23px 22px}
.g2{height:216px;margin-top:18px;padding:21px 0 0 10px;grid-template-rows:24px 23px 21px 25px 23px 23px 21px 22px}
.g2 .cap{left:88px}
.g3{height:198px;margin-top:19px;padding:8px 0 0 8px;border-bottom:0;border-radius:4px 4px 0 0;grid-template-rows:16px 18px 19px 22px 22px 22px 18px 51px}
.g3 .cap{left:60px}
.group h4{font:bold 13.500px "DejaVu Sans",sans-serif;display:flex;align-items:center;gap:2px;padding-left:2px}
.group h4 svg{width:12px;height:11px;fill:#fff}
.group p{display:flex;align-items:center}
.mini{position:absolute;left:98px;width:40px;height:18px;background:#aaa;border-radius:3px;color:#333}
.mini.w{background:#fff;width:12px;height:12px}
.drop{height:18px;width:200px;margin-left:4px;padding-left:6px;line-height:17px;background:linear-gradient(#d0d0d0,#999);border-radius:3px;color:#111}
.g3 .dis{padding-left:76px}
.g3 .chan{padding-left:57px}
.f{display:grid;grid-template-columns:63px 29px 229px;align-items:center}
.check{width:13px;height:13px;background:#eee;border:1px solid #999}
.check svg{width:11px;height:11px;stroke:#222;stroke-width:2.400;fill:none}
.f em{font-style:normal;height:19px;line-height:18px;background:linear-gradient(#d0d0d0,#999);border-radius:3px;color:#111;padding-left:6px;display:flex;justify-content:space-between;align-items:center}
.f em svg{width:9px;height:8px;margin-right:4px;fill:#444}
.f.prog em{margin-left:-2px}
.ext{display:flex;justify-content:space-between;padding-right:13px}
.ext .check{background:#fff}
.knobs{display:grid;padding:7px 0 0 70px;grid-template-columns:28px 71px 28px 80px;grid-template-rows:22px 21px;align-items:center}
.knobs svg{width:21px;height:20px}
.vscroll{width:16px;height:600px;margin-left:9px;background:#404040;display:flex;flex-direction:column;align-items:center;flex:none}
.thumb{width:12px;height:552px;margin-bottom:35px;background:linear-gradient(90deg,#ccc,#999)}
.vscroll svg,.vs svg{width:12px;height:11px;background:#777;fill:#333}
.tracks{margin-left:228px;flex:none}
.tracks text,.center text{font:14px "DejaVu Sans",sans-serif;fill:#111}
.hscroll{height:16px;background:#404040;display:flex;align-items:center;padding:0 2px;width:633px}
.hscroll svg{width:10px;height:12px;background:#777;fill:#333}
.hscroll b{width:22px;height:12px;background:linear-gradient(#ddd,#999)}
.hscroll .end{margin-left:auto}
.main footer{display:flex;justify-content:flex-end;align-items:center;height:22px;margin-top:4px;padding-right:5px;gap:5px}
.main footer i{width:60px;height:18px;background:#fff;border:1px solid #aaa;border-radius:2px}
.inf{font:bold 14px "Liberation Serif",serif;fill:#fff}
.score{position:absolute;left:146px;top:80px;width:979px;height:535px;background:#000;border:solid #d64937;border-width:0 4px 4px;border-radius:4px 4px 0 0;box-shadow:inset -1px 0 #f08b7c,2px 6px 18px 3px rgba(0,0,0,.65);outline:1px solid #943025;outline-offset:-1px}
.score .titlebar{margin:0 -3px;padding-left:3px}
.score .wbtns{right:4px}
.body{display:flex;height:392px;color:#000}
.col{width:35px;background:linear-gradient(90deg,#dadada,#989898);padding-top:4px;flex:none}
.col>svg{width:35px;height:30px}
.col>svg.act{width:29px;margin-left:3px}
.col>svg.act>*{transform:translateX(-3px)}
.col .cv{height:20px}
.dim{fill:#444;color:#444}
.hgrip{display:block;width:29px;height:3px;margin-left:3px;background:linear-gradient(#999 1px,#eee 1px 2px,#ccc 2px)}
.two{margin-top:6px}
.three{margin:0 0 2px 3px}
.hsep{display:block;width:26px;height:2px;background:#000;margin:0 0 1px 4px}
.center{width:831px}
.view{border:2px solid #000058;display:flex;height:256px;width:831px}
.vs{width:16px;background:#404040;display:flex;flex-direction:column;align-items:center;padding:1px 0}
.vs div{width:12px;height:112px;margin-bottom:auto;background:linear-gradient(90deg,#ccc,#999)}
.hscroll .sm{width:10px;margin-left:47px}
.center .hscroll{width:831px}
.cursor{position:absolute;left:136px;top:89px}
```
